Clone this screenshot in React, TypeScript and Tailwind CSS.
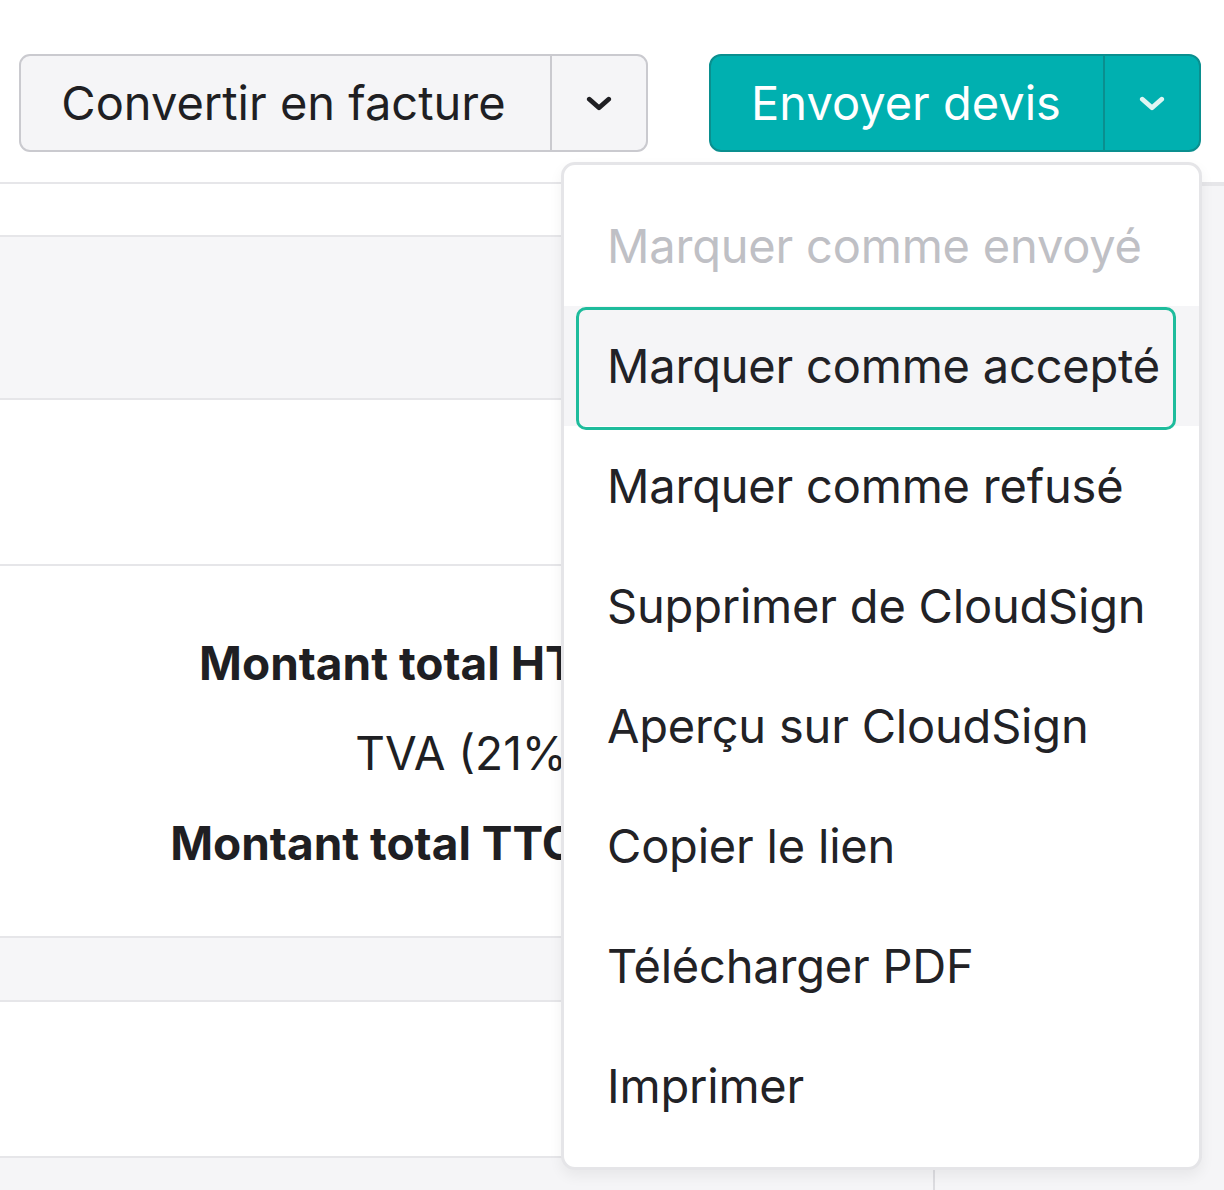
import React from "react";

const items = [
  { label: "Marquer comme envoyé", disabled: true },
  { label: "Marquer comme accepté", active: true },
  { label: "Marquer comme refusé" },
  { label: "Supprimer de CloudSign" },
  { label: "Aperçu sur CloudSign" },
  { label: "Copier le lien" },
  { label: "Télécharger PDF" },
  { label: "Imprimer" },
];

function Chevron({ className }: { className?: string }) {
  return (
    <svg viewBox="0 0 24 14" className={className} fill="none" stroke="currentColor" strokeWidth={4.5} strokeLinecap="round" strokeLinejoin="round">
      <polyline points="3,3 12,11 21,3" />
    </svg>
  );
}

function SplitButtons() {
  return (
    <div className="flex items-start gap-[61px] pl-[19px] pt-[54px]">
      <div className="flex h-[98px] w-[629px] overflow-hidden rounded-[11px] border-2 border-[#cacacf] bg-[#f5f5f7] text-[#1f1f23]">
        <div className="flex flex-1 items-center justify-center pr-[4px] text-[47px]">Convertir en facture</div>
        <div className="flex w-[96px] items-center justify-center border-l-2 border-[#cacacf]">
          <Chevron className="h-[15px] w-[26px]" />
        </div>
      </div>
      <div className="flex h-[98px] w-[492px] overflow-hidden rounded-[12px] border-2 border-[#0a8f8f] bg-[#00b0b0] text-white">
        <div className="flex flex-1 items-center justify-center pr-[2px] text-[47px]">Envoyer devis</div>
        <div className="flex w-[96px] items-center justify-center border-l-2 border-[#0a8f8f] text-[#dff5f3]">
          <Chevron className="h-[15px] w-[26px]" />
        </div>
      </div>
    </div>
  );
}

function Table() {
  return (
    <div className="mt-[30px] flex flex-col">
      <div className="h-[53px] border-t-2 border-[#e6e6e9] bg-white" />
      <div className="h-[163px] border-t-2 border-[#e6e6e9] bg-[#f6f6f8]" />
      <div className="h-[166px] border-t-2 border-[#e6e6e9] bg-white" />
      <div className="flex h-[372px] flex-col items-end gap-[24px] border-t-2 border-[#e6e6e9] bg-white pr-[622px] pt-[64px] leading-[66px] text-[#1f1f23]">
        <div className="text-[46px] font-bold">Montant total HT :</div>
        <div className="mr-[-8px] text-[46px]">TVA (21%) :</div>
        <div className="text-[46px] font-bold">Montant total TTC :</div>
      </div>
      <div className="h-[64px] border-t-2 border-[#e6e6e9] bg-[#f6f6f8]" />
      <div className="h-[156px] border-t-2 border-[#e6e6e9] bg-white" />
      <div className="flex h-[40px] border-t-2 border-[#e6e6e9] bg-[#f5f5f7]">
        <div className="w-[933px]" />
        <div className="mt-[10px] w-[2px] bg-[#dcdce0]" />
      </div>
    </div>
  );
}

function Menu() {
  return (
    <div className="absolute left-[561px] top-[162px] w-[641px] rounded-[14px] border-[3px] border-[#e5e5e8] bg-white py-[21px] shadow-[0_6px_14px_rgba(0,0,0,0.06)]">
      {items.map((it) => (
        <div
          key={it.label}
          className={
            "relative flex h-[120px] items-center pl-[43px] text-[47px] tracking-[-0.2px] " +
            (it.disabled ? "text-[#bfc0c5]" : "text-[#222226]") +
            (it.active ? " bg-[#f5f5f7]" : "")
          }
        >
          {it.active && <span className="absolute bottom-[-4px] left-[12px] right-[23px] top-[1px] rounded-[10px] border-[3px] border-[#1ebc9c]" />}
          <span className="relative">{it.label}</span>
        </div>
      ))}
    </div>
  );
}

export default function App() {
  return (
    <div className="relative h-[1190px] w-[1224px] overflow-hidden bg-white" style={{ fontFamily: "Inter, 'Noto Sans', sans-serif" }}>
      <SplitButtons />
      <div className="absolute bottom-0 right-0 top-[184px] w-[22px] border-t-2 border-[#e6e6e9] bg-[#f5f5f7]" />
      <Table />
      <Menu />
    </div>
  );
}
